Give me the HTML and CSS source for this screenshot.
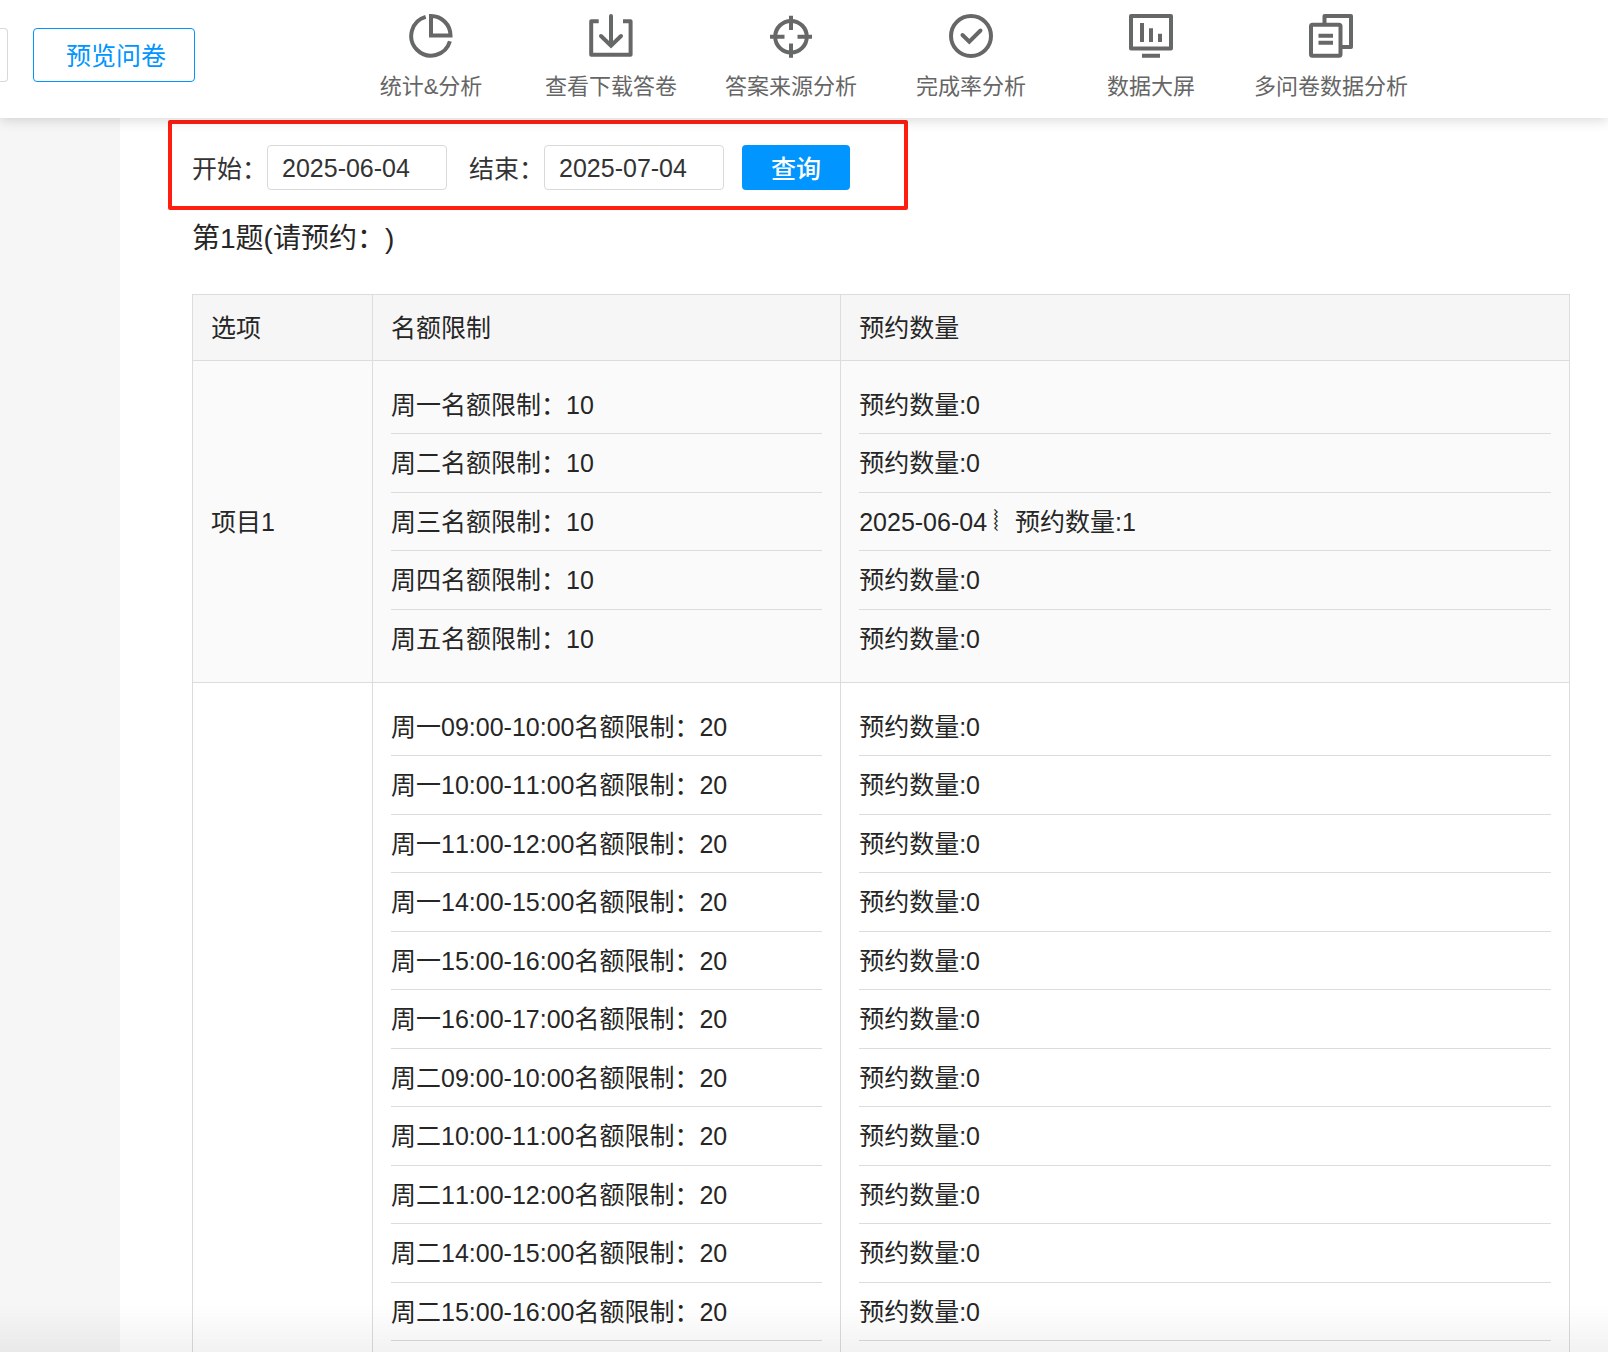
FILE: index.html
```html
<!DOCTYPE html>
<html lang="zh-CN">
<head>
<meta charset="utf-8">
<meta name="viewport" content="width=device-width, initial-scale=1">
<title>预约统计</title>
<link rel="stylesheet" href="styles.css">
</head>
<body>
<div class="app">
  <header class="topbar">
    <div class="topbar-edge"></div>
    <button type="button" class="preview-btn">预览问卷</button>
    <nav class="tools">
      <a class="tool" href="#stats">
        <svg class="tool-icon" viewBox="0 0 44 44"><path d="M16.7 2.9A19.7 19.7 0 1 0 40.9 27.3M22 2A19.5 19.5 0 0 1 41.5 21.5H22Z"/></svg>
        <span>统计&amp;分析</span>
      </a>
      <a class="tool" href="#download">
        <svg class="tool-icon" viewBox="0 0 44 44"><path stroke-linejoin="round" d="M9.7 7.2H2.2V40.7H41.6V7.2H34"/><path stroke-linecap="round" d="M22 2V31M12 22L22 31.8L32 22"/></svg>
        <span>查看下载答卷</span>
      </a>
      <a class="tool" href="#source">
        <svg class="tool-icon" viewBox="0 0 44 44"><circle cx="22" cy="22.7" r="15.8"/><path d="M1 22.7H15.5M28.5 22.7H43M22 1.7V16M22 29.5V43.7"/></svg>
        <span>答案来源分析</span>
      </a>
      <a class="tool" href="#completion">
        <svg class="tool-icon" viewBox="0 0 44 44"><circle cx="22" cy="22" r="20"/><path stroke-linecap="round" d="M13.5 21L20.3 27.6L31.5 16.5"/></svg>
        <span>完成率分析</span>
      </a>
      <a class="tool" href="#screen">
        <svg class="tool-icon" viewBox="0 0 44 44"><path stroke-linejoin="round" d="M2 2H42V34.6H2Z"/><path d="M13 9V28M22 14.3V28M31 19.7V28M13 41.7H31"/></svg>
        <span>数据大屏</span>
      </a>
      <a class="tool" href="#multi">
        <svg class="tool-icon" viewBox="0 0 44 44"><rect x="2" y="10.8" width="29.5" height="31" rx="1.5"/><path stroke-linejoin="round" d="M15.5 10V2H42V33H33"/><path d="M9.5 21.7H24M9.5 28.8H24"/></svg>
        <span>多问卷数据分析</span>
      </a>
    </nav>
  </header>
  <main class="content">
    <form class="filter">
      <label for="start">开始：</label>
      <input class="date" id="start" type="text" value="2025-06-04">
      <label class="label-end" for="end">结束：</label>
      <input class="date" id="end" type="text" value="2025-07-04">
      <button type="button" class="query-btn">查询</button>
    </form>
    <h1 class="question">第1题(请预约：)</h1>
    <table class="quota">
      <colgroup><col class="col-option"><col class="col-limit"><col></colgroup>
      <thead>
        <tr><th scope="col">选项</th><th scope="col">名额限制</th><th scope="col">预约数量</th></tr>
      </thead>
      <tbody>
        <tr class="shaded">
          <td class="option">项目1</td>
          <td><ul class="slots closed">
            <li>周一名额限制：10</li>
            <li>周二名额限制：10</li>
            <li>周三名额限制：10</li>
            <li>周四名额限制：10</li>
            <li>周五名额限制：10</li>
          </ul></td>
          <td><ul class="slots closed">
            <li>预约数量:0</li>
            <li>预约数量:0</li>
            <li>2025-06-04<span class="divider">⦚</span>预约数量:1</li>
            <li>预约数量:0</li>
            <li>预约数量:0</li>
          </ul></td>
        </tr>
        <tr>
          <td class="option"></td>
          <td><ul class="slots">
            <li>周一09:00-10:00名额限制：20</li>
            <li>周一10:00-11:00名额限制：20</li>
            <li>周一11:00-12:00名额限制：20</li>
            <li>周一14:00-15:00名额限制：20</li>
            <li>周一15:00-16:00名额限制：20</li>
            <li>周一16:00-17:00名额限制：20</li>
            <li>周二09:00-10:00名额限制：20</li>
            <li>周二10:00-11:00名额限制：20</li>
            <li>周二11:00-12:00名额限制：20</li>
            <li>周二14:00-15:00名额限制：20</li>
            <li>周二15:00-16:00名额限制：20</li>
          </ul></td>
          <td><ul class="slots">
            <li>预约数量:0</li>
            <li>预约数量:0</li>
            <li>预约数量:0</li>
            <li>预约数量:0</li>
            <li>预约数量:0</li>
            <li>预约数量:0</li>
            <li>预约数量:0</li>
            <li>预约数量:0</li>
            <li>预约数量:0</li>
            <li>预约数量:0</li>
            <li>预约数量:0</li>
          </ul></td>
        </tr>
      </tbody>
    </table>
  </main>
  <div class="fade"></div>
</div>
</body>
</html>
```
FILE: styles.css
```css
* {
  box-sizing: border-box;
}

body {
  margin: 0;
  background: #f6f6f6;
  color: #262626;
  font-family: "Liberation Sans", "Noto Sans CJK SC", "DejaVu Sans", sans-serif;
  font-size: 25px;
  font-kerning: none;
  text-spacing-trim: space-all;
}

button,
input {
  font: inherit;
}

.app {
  display: flex;
  flex-direction: column;
  height: 100vh;
  overflow: hidden;
}

.topbar {
  position: relative;
  z-index: 1;
  flex: none;
  display: flex;
  height: 118px;
  background: #fff;
  box-shadow: 0 2px 12px rgba(0, 0, 0, 0.16);
}

.topbar-edge {
  width: 8px;
  height: 54px;
  margin-top: 28px;
  border: 1px solid #d9d9d9;
  border-left: 0;
  border-radius: 0 4px 4px 0;
}

.preview-btn {
  width: 162px;
  height: 54px;
  margin: 28px 0 0 25px;
  padding: 0 0 2px 4px;
  border: 1px solid #0095ff;
  border-radius: 4px;
  background: #fff;
  color: #0095ff;
}

.tools {
  display: flex;
  margin-left: 146px;
}

.tool {
  display: flex;
  flex-direction: column;
  align-items: center;
  gap: 17px;
  width: 180px;
  padding-top: 14px;
  color: #666;
  font-size: 22px;
  line-height: 24px;
  text-decoration: none;
  white-space: nowrap;
}

.tool-icon {
  width: 44px;
  height: 44px;
  fill: none;
  stroke: #666867;
  stroke-width: 4;
}

.content {
  flex: 1 0 auto;
  margin-left: 120px;
  padding: 2px 38px 0 72px;
  background: #fff;
}

.filter {
  display: flex;
  align-items: center;
  width: fit-content;
  height: 90px;
  margin-left: -24px;
  padding: 4px 54px 0 20px;
  border: 4px solid #ff1e10;
  border-radius: 2px;
  color: #333;
}

.label-end {
  margin-left: 22px;
}

.date {
  width: 180px;
  height: 45px;
  padding: 2px 14px 0;
  border: 1px solid #d9d9d9;
  border-radius: 4px;
  background: #fff;
  color: #333;
}

.query-btn {
  width: 108px;
  height: 45px;
  margin-left: 18px;
  padding: 0;
  border: 0;
  border-radius: 4px;
  background: #0095ff;
  color: #fff;
  font-weight: 500;
}

.question {
  margin: 0 0 26px;
  font-size: 28px;
  font-weight: 400;
  line-height: 58px;
}

.quota {
  width: 100%;
  table-layout: fixed;
  border-collapse: collapse;
}

.col-option {
  width: 180px;
}

.col-limit {
  width: 34%;
}

.quota th,
.quota td {
  padding: 15px 18px 14px;
  border: 1px solid #dcdcdc;
  text-align: left;
  font-weight: 400;
}

.quota th {
  height: 66px;
  padding: 10px 18px 14px;
  background: #f6f6f6;
}

.quota .option {
  padding-bottom: 18px;
}

.shaded {
  background: #fafafa;
}

.slots {
  margin: 0;
  padding: 0;
  list-style: none;
}

.slots li {
  height: 58px;
  border-bottom: 1px solid #dcdcdc;
  line-height: 58px;
  white-space: nowrap;
}

.slots li:nth-child(even) {
  height: 59px;
}

.closed li:last-child {
  border-color: transparent;
}

.divider {
  display: inline-block;
  width: 28px;
  padding-left: 6px;
  font-size: 28px;
  line-height: 28px;
}

.fade {
  position: fixed;
  inset: auto 0 0;
  height: 48px;
  background: linear-gradient(rgba(0, 0, 0, 0), rgba(0, 0, 0, 0.05));
  pointer-events: none;
}
```
